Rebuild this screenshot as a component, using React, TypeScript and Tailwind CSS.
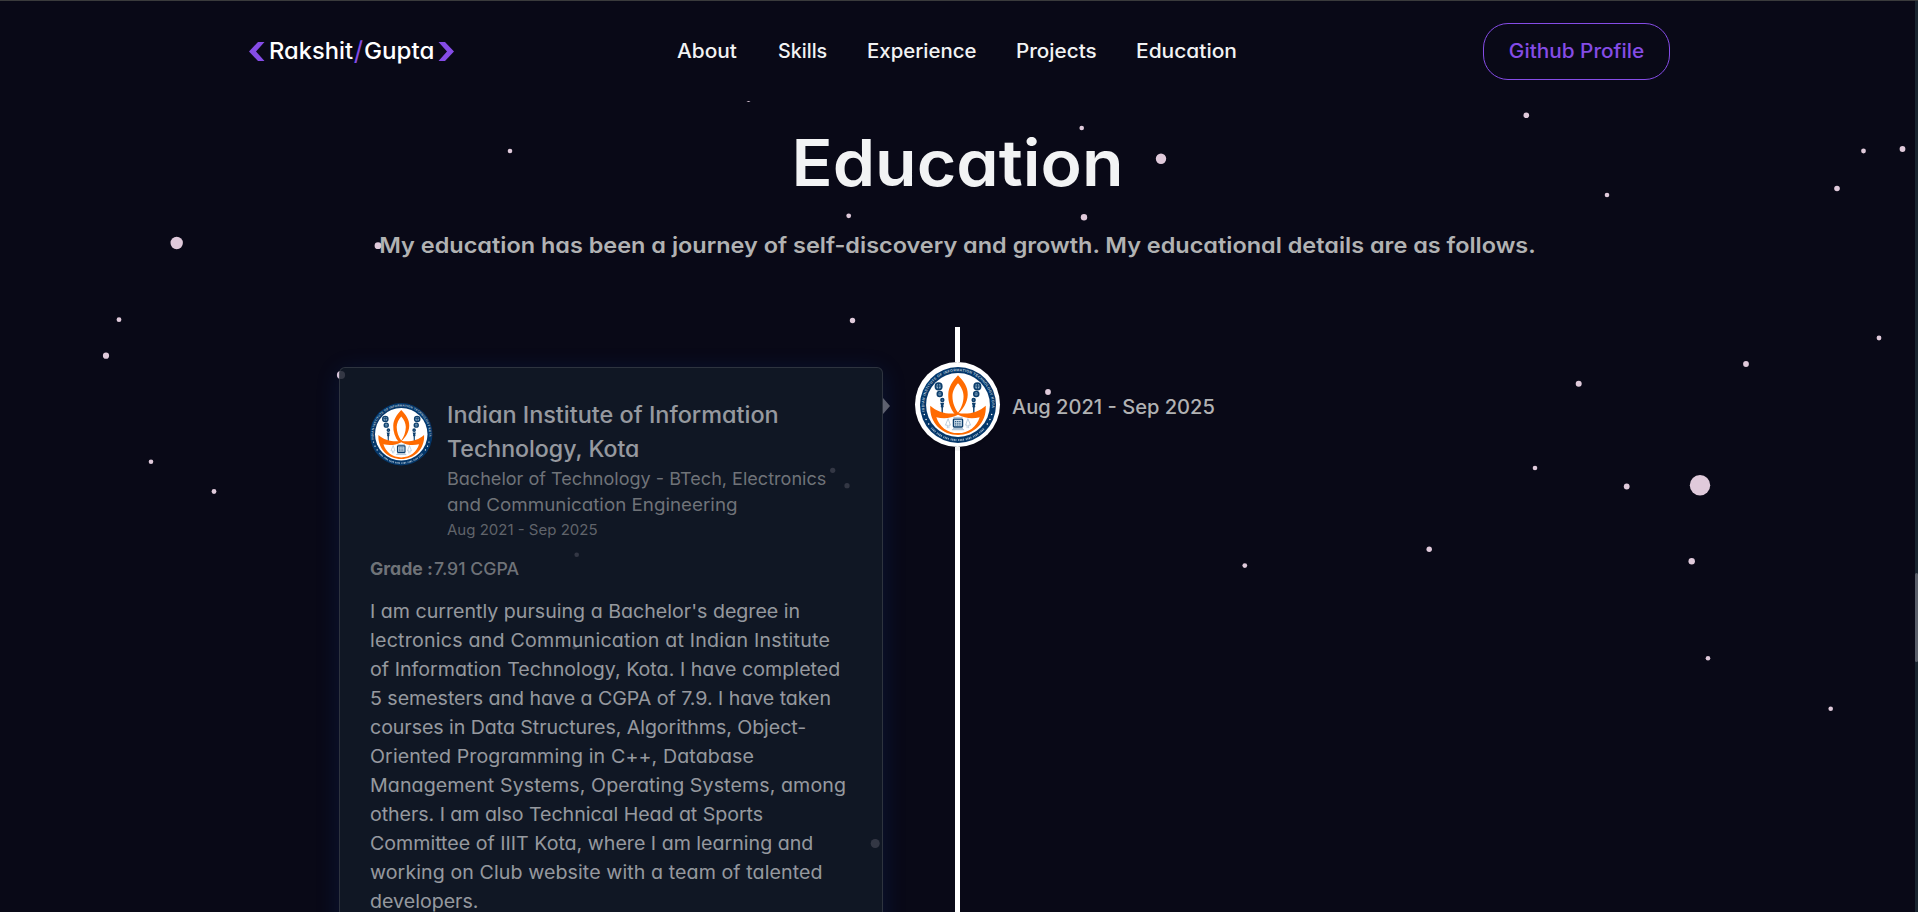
const STARS: [number, number, number][] = [
  [748.5, 99.6, 2.3], [1526.3, 115.3, 2.8], [1607, 195, 2.3], [1863.5, 151, 2.4], [1902.5, 149, 2.9],
  [1837, 188.5, 2.8], [1081.7, 128, 2.3], [1161, 158.7, 5.2], [848.7, 215.8, 2.4], [1084, 217.2, 3.2],
  [1048, 392, 2.9], [1535, 468, 2.3], [1626.7, 486.5, 2.9], [1700, 485.3, 10.2], [1429.2, 549.3, 2.7],
  [1244.8, 565.6, 2.4], [1691.7, 561.3, 3.2], [1708, 658.3, 2.3], [1830.7, 708.7, 2.3], [510, 151, 2.3],
  [176.7, 243, 6.2], [378, 245.7, 3.4], [119, 319.7, 2.4], [106, 355.7, 3.1], [852.5, 320.5, 2.7],
  [151, 461.7, 2.3], [214, 491.5, 2.4], [1879, 338, 2.4], [1746, 364, 2.9], [1578.7, 383.7, 3],
  [341, 375, 4.1], [832.7, 470.3, 2.6], [847, 485.7, 2.6], [576.7, 554.8, 2.3], [574.7, 647.3, 2.4],
  [875.2, 843.5, 4.5],
];

function Stars() {
  return (
    <svg className="pointer-events-none absolute left-0 top-0 h-[912px] w-[1915px]" viewBox="0 0 1915 912" fill="#e0cadb">
      {STARS.map(([x, y, r], i) => (
        <circle key={i} cx={x} cy={y} r={r} />
      ))}
    </svg>
  );
}

function Torch({ side }: { side: 1 | -1 }) {
  return (
    <g transform={side === 1 ? undefined : "scale(-1 1)"}>
      <g fill="#8fb0c9" stroke="#0d3f6d" strokeWidth="2.2">
        <circle cx="25.5" cy="-24.5" r="4.2" />
        <circle cx="24" cy="-14.6" r="3.2" />
        <circle cx="20.6" cy="-6.6" r="1.8" />
      </g>
      <path d="M22.5-25h6M25.5-28v7M22-14.6h4" stroke="#0d3f6d" strokeWidth="1.3" />
      <path d="M18.2-3h5.2l-1 3.6 .4 2-1 .6-.2 7.6h-1.6l-.2-7.6-1-.6.4-2z" fill="#0d3f6d" />
    </g>
  );
}

function Emblem({ id, className }: { id: string; className: string }) {
  return (
    <svg className={className} viewBox="-50 -50 100 100">
      <circle r="50" fill="#04376a" />
      <circle r="42" fill="#fff" />
      <defs>
        <path id={id} d="M-43.8 8.5A44.6 44.6 0 1 1 43.8 8.5" />
      </defs>
      <text fill="#b4c6d6" fontFamily="Liberation Sans" fontSize="4.8" fontWeight="700">
        <textPath href={`#${id}`} textLength="152">INDIAN INSTITUTE OF INFORMATION TECHNOLOGY KOTA</textPath>
      </text>
      <path
        d="M-35 30A46 46 0 0 0 35 30"
        fill="none"
        stroke="#9db5ca"
        strokeWidth="2.6"
        strokeDasharray="1.2 .9 1.2 .7 1.6 .8 1.2 2.4"
      />
      <g fill="#fff">
        <circle cx="-44.3" cy="12.5" r="1" /><circle cx="-42" cy="19" r="1" /><circle cx="-38.6" cy="25" r="1" />
        <circle cx="44.3" cy="12.5" r="1" /><circle cx="42" cy="19" r="1" /><circle cx="38.6" cy="25" r="1" />
      </g>
      <Torch side={1} />
      <Torch side={-1} />
      <path fill="#ff6b00" d="M-36.5 1C-27 10-12 13 0 10.5C12 13 27 10 36.5 1C38 24 20 39.5 0 39.5S-38 24-36.5 1Z" />
      <path fill="#fff" d="M-28.5 16C-19 18.500-9 17.500 0 12.800C9 17.500 19 18.500 28.500 16C25 28 14 37 0 37S-25 28-28.500 16Z" />
      <path
        fill="#ff6b00"
        fillRule="evenodd"
        d="M0-39C7-31.5 13.2-24 12.8-13.5C12.5-3 6.5 6.5-2.5 13.5L-4 12.5C-10 5-13.2-4-12.8-14C-12.5-24-7-31.5 0-39ZM0-28.5C-4-24-7.3-18-7.3-11.5C-7.3-3-4 4.5 0 10C4 4.5 7.3-3 7.3-11.5C7.3-18 4-24 0-28.5Z"
      />
      <g fill="none" stroke="#0d3f6d">
        <rect x="-6" y="18.5" width="12" height="10.5" rx="1" fill="#cfe0ec" strokeWidth="1.8" />
        <path d="M-4 21.7h8M-4 24h8M-4 26.3h8" strokeWidth="1.1" strokeDasharray="1.8 1" />
        <path d="M-8 32.5h16M-6.5 30.8h13M-6 16.3h12" stroke="#7f9fba" strokeWidth=".9" />
      </g>
      <path
        d="M-13 18l-3.5 8.5h2.5v4M-13 18l3 8.5h-2v4M13 18l3.5 8.5h-2.5v4M13 18l-3 8.5h2v4"
        fill="none"
        stroke="#a8c0d4"
        strokeWidth="1"
      />
    </svg>
  );
}

function Bracket({ flip = false }: { flip?: boolean }) {
  return (
    <svg className={flip ? "h-[19px] w-4 -scale-x-100" : "h-[19px] w-4"} viewBox="0 0 16 19" fill="#854ce6">
      <path d="M0 9.5 9 0h6.500L7 9.5l8.500 9.500H9z" />
    </svg>
  );
}

const NAV = [
  { label: "About", box: "w-[61px] scale-x-[1.07]" },
  { label: "Skills", box: "w-[49.5px] scale-x-[1.01]" },
  { label: "Experience", box: "w-[109px] scale-x-[1.045]" },
  { label: "Projects", box: "w-[80px] scale-x-[1.06]" },
  { label: "Education", box: "w-[101px] scale-x-[1.075]" },
];

const DESCRIPTION = [
  { text: "I am currently pursuing a Bachelor's degree in", track: "tracking-[0px]" },
  { text: "lectronics and Communication at Indian Institute", track: "tracking-[0.21px]" },
  { text: "of Information Technology, Kota. I have completed", track: "tracking-[0.03px]" },
  { text: "5 semesters and have a CGPA of 7.9. I have taken", track: "tracking-[-0.04px]" },
  { text: "courses in Data Structures, Algorithms, Object-", track: "tracking-[-0.06px]" },
  { text: "Oriented Programming in C++, Database", track: "tracking-[0.11px]" },
  { text: "Management Systems, Operating Systems, among", track: "tracking-[0.09px]" },
  { text: "others. I am also Technical Head at Sports", track: "tracking-[-0.05px]" },
  { text: "Committee of IIIT Kota, where I am learning and", track: "tracking-[0px]" },
  { text: "working on Club website with a team of talented", track: "tracking-[0.08px]" },
  { text: "developers.", track: "tracking-[0px]" },
];

function Header() {
  return (
    <header className="relative grid h-[100px] shrink-0 grid-cols-[427.500px_1fr_187px] items-center bg-[#090917] pl-[249px] pr-[245px]">
      <a className="flex items-center text-[23px] font-medium leading-[30px] text-white">
        <Bracket />
        <span className="ml-[4px] w-[84px] origin-left scale-x-[1.03]">Rakshit</span>
        <span className="w-[11px] text-center text-[26px] font-normal text-[#854ce6]">/</span>
        <span className="w-[74px] origin-left scale-x-[1.05]">Gupta</span>
        <Bracket flip />
      </a>
      <nav className="flex gap-10 text-[19.5px] font-medium leading-[30px] text-[#f2f3f4]">
        {NAV.map((item) => (
          <a key={item.label} className={`origin-left ${item.box}`}>{item.label}</a>
        ))}
      </nav>
      <a className="flex h-[57px] items-center justify-center rounded-[25px] border border-[#854ce6] pt-px text-[19.5px] font-medium text-[#854ce6]">
        <span className="scale-x-[1.065]">Github Profile</span>
      </a>
    </header>
  );
}

function EducationCard() {
  return (
    <article className="relative ml-[339px] mt-[40px] h-[700px] w-[544px] rounded-[6px] border border-white/[0.125] bg-[rgba(18,26,39,0.84)] px-[30px] pt-[30px] shadow-[0_4px_24px_rgba(23,92,230,0.15)]">
      <div className="flex gap-[14.5px]">
        <Emblem id="emblem-arc-card" className="mt-[5px] size-[62.5px] shrink-0" />
        <div>
          <h3 className="text-[22.5px] font-medium leading-[34px] text-[#f2f3f4]/60">
            <span className="block origin-left scale-x-[1.042]">Indian Institute of Information</span>
            <span className="block origin-left scale-x-[1.028]">Technology, Kota</span>
          </h3>
          <p className="text-[17.5px] leading-[26px] text-[#b1b2b3]/60">
            <span className="block origin-left scale-x-[1.032]">Bachelor of Technology - BTech, Electronics</span>
            <span className="block origin-left scale-x-[1.073]">and Communication Engineering</span>
          </p>
          <p className="origin-left scale-x-[1.035] text-[14.5px] leading-[23px] text-[#b1b2b3]/50">Aug 2021 - Sep 2025</p>
        </div>
      </div>
      <p className="mt-[15px] flex text-[17px] font-medium leading-[26px] text-[#b1b2b3]/60">
        <b className="w-[63.5px] origin-left scale-x-[1.04] font-bold">Grade :</b>
        <span className="origin-left scale-x-[1.04]">7.91 CGPA</span>
      </p>
      <div className="mt-[15px] origin-left scale-x-[1.06] text-[18.5px] leading-[29px] text-[#f2f3f4]/60">
        {DESCRIPTION.map((line) => (
          <p key={line.text} className={line.track}>{line.text}</p>
        ))}
      </div>
      <span className="absolute -right-[8px] top-[30px] border-y-8 border-l-[7px] border-y-transparent border-l-white/35" />
    </article>
  );
}

export default function App() {
  return (
    <div className="flex h-[912px] w-full flex-col overflow-hidden whitespace-nowrap bg-[#090917] font-['Inter',sans-serif] [font-feature-settings:'cv11']">
      <div className="h-px shrink-0 bg-[#3a3b3c]" />
      <div className="flex min-h-0 flex-1">
        <main className="relative flex w-[1915px] flex-col">
          <div className="absolute -top-px left-0"><Stars /></div>
          <Header />
          <h1 className="relative mt-[26px] scale-x-[1.062] text-center text-[64px] font-semibold leading-[72px] text-[#f2f3f4]">Education</h1>
          <p className="relative mt-[31px] scale-x-[1.066] text-center text-[22px] font-semibold leading-[30px] text-[#b1b2b3]">
            My education has been a journey of self-discovery and growth. My educational details are as follows.
          </p>
          <section className="relative mt-[67px] grid h-[585px] grid-cols-[915px_85px_1fr]">
            <EducationCard />
            <div className="flex flex-col items-center">
              <div className="h-[35px] w-[5px] shrink-0 bg-white" />
              <div className="z-10 flex size-[85px] shrink-0 items-center justify-center rounded-full bg-white shadow-[0_4px_0_rgba(0,0,0,0.05)]">
                <Emblem id="emblem-arc-node" className="size-[76px]" />
              </div>
              <div className="w-[5px] flex-1 bg-white" />
            </div>
            <p className="ml-[12px] mt-[65px] origin-left justify-self-start scale-x-[1.03] text-[19.5px] font-medium leading-[30px] text-[#b1b2b3]">Aug 2021 - Sep 2025</p>
          </section>
        </main>
        <aside className="flex-1 bg-[#1a2530] pt-[572px]">
          <div className="h-[89px] rounded-[2px] bg-[#595e69]" />
        </aside>
      </div>
    </div>
  );
}
